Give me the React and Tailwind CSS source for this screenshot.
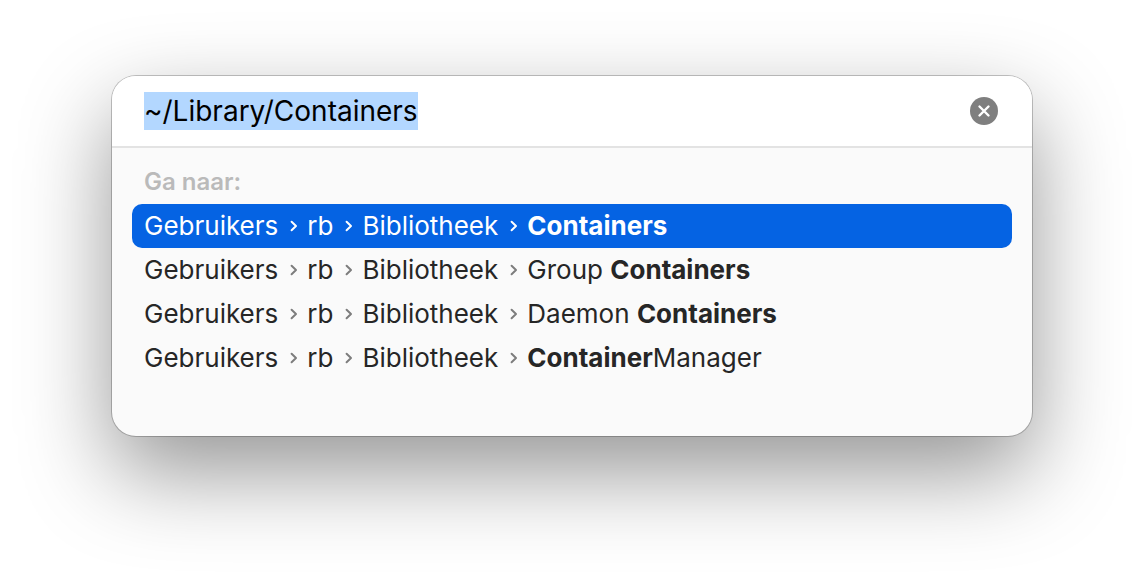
import React, { useState, useEffect, useRef } from 'react';

const PARENTS = ['Gebruikers', 'rb', 'Bibliotheek'];

const RESULTS = [
    { id: 1, before: '', match: 'Containers', after: '' },
    { id: 2, before: 'Group ', match: 'Containers', after: '' },
    { id: 3, before: 'Daemon ', match: 'Containers', after: '' },
    { id: 4, before: '', match: 'Container', after: 'Manager' },
];

const Chevron = ({ active }) => (
    <svg
        viewBox="0 0 8 12"
        className={`w-2 h-3 ml-3 mr-[9px] shrink-0 ${active ? 'text-white' : 'text-[#7d7d7d]'}`}
        fill="none"
        stroke="currentColor"
        strokeWidth="2"
        strokeLinecap="round"
        strokeLinejoin="round"
        aria-hidden="true"
    >
        <path d="M1.6 1.8 L6 6 L1.6 10.2" />
    </svg>
);

const App = () => {
    const [path, setPath] = useState('~/Library/Containers');
    const [selected, setSelected] = useState(1);
    const inputRef = useRef(null);

    // Start with the whole path selected, so typing replaces it
    useEffect(() => {
        inputRef.current.focus();
        inputRef.current.select();
    }, []);

    return (
        <div className="min-h-screen bg-white px-28 pt-19 pb-37 font-['Inter',sans-serif]">
            <div className="rounded-3xl overflow-hidden bg-[#fafafa] shadow-[0_0_0_1px_rgba(0,0,0,0.22),0_36px_90px_rgba(0,0,0,0.42)]">
                <div className="flex items-center bg-white border-b-2 border-[#e3e3e3] pl-8 pr-[34px] py-4">
                    <input
                        ref={inputRef}
                        type="text"
                        aria-label="Ga naar map"
                        spellCheck={false}
                        value={path}
                        onChange={(e) => setPath(e.target.value)}
                        className="flex-1 min-w-0 h-[38px] text-[28px] leading-[38px] text-black outline-none selection:bg-[#b3d7ff] selection:text-black"
                    />
                    <button
                        type="button"
                        aria-label="Wis"
                        onClick={() => setPath('')}
                        className="flex items-center justify-center w-7 h-7 rounded-full bg-[#7f7f7f] text-white"
                    >
                        <svg viewBox="0 0 28 28" className="w-7 h-7" fill="none" stroke="currentColor" strokeWidth="2.4" strokeLinecap="round">
                            <path d="M9.5 9.5 L18.5 18.5 M18.5 9.5 L9.5 18.5" />
                        </svg>
                    </button>
                </div>

                <div className="px-5 pt-4 pb-14">
                    <h2 className="px-3 h-10 text-[24px] leading-9 font-semibold text-[#bababa]">Ga naar:</h2>
                    <ul>
                        {RESULTS.map((item) => {
                            const active = item.id === selected;

                            return (
                                <li key={item.id}>
                                    <button
                                        type="button"
                                        onClick={() => setSelected(item.id)}
                                        className={`flex items-center w-full h-11 px-3 rounded-[10px] text-[26px] leading-11 whitespace-pre ${active ? 'bg-[#0563e3] text-white' : 'text-[#262626]'
                                            }`}
                                    >
                                        {PARENTS.map((name) => (
                                            <React.Fragment key={name}>
                                                <span>{name}</span>
                                                <Chevron active={active} />
                                            </React.Fragment>
                                        ))}
                                        <span>
                                            {item.before}
                                            <strong className="font-bold">{item.match}</strong>
                                            {item.after}
                                        </span>
                                    </button>
                                </li>
                            );
                        })}
                    </ul>
                </div>
            </div>
        </div>
    );
};

export default App;
